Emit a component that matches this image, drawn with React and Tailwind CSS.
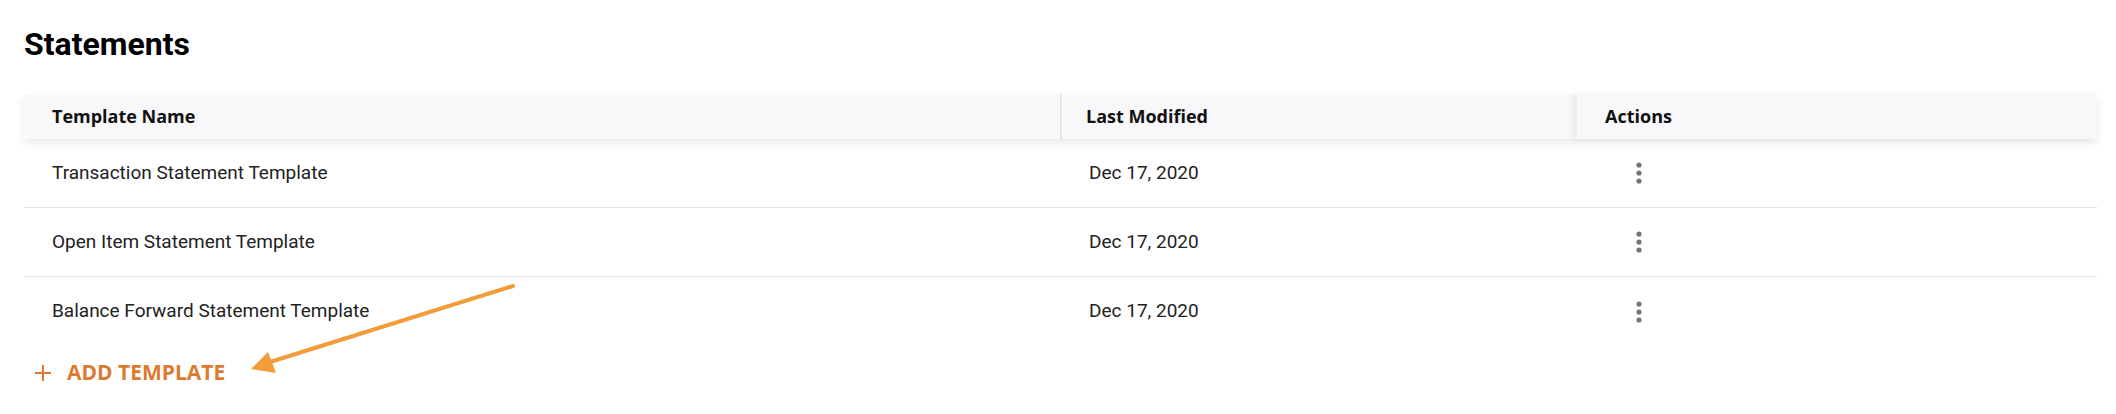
import React from 'react';

const templates = [
  { name: 'Transaction Statement Template', modified: 'Dec 17, 2020' },
  { name: 'Open Item Statement Template', modified: 'Dec 17, 2020' },
  { name: 'Balance Forward Statement Template', modified: 'Dec 17, 2020' },
];

const MoreIcon = () => (
  <svg width="24" height="24" viewBox="0 0 24 24" fill="#767676">
    <circle cx="12" cy="4" r="2.6" />
    <circle cx="12" cy="12" r="2.6" />
    <circle cx="12" cy="20" r="2.6" />
  </svg>
);

// Callout arrow pointing at the add button
const CalloutArrow = () => (
  <svg className="absolute left-0 top-0 pointer-events-none" width="2116" height="414">
    <line x1="513" y1="286" x2="270" y2="362" stroke="#f39c3a" strokeWidth="4" strokeLinecap="round" />
    <polygon points="251,369 268,352 276,373" fill="#f39c3a" />
  </svg>
);

const App = () => {
  return (
    <div className="relative w-[2116px] h-[414px] bg-white pl-6 pt-[26px] font-['Roboto',sans-serif] overflow-hidden">
      <h1 className="text-[32px] leading-9 font-bold text-black">Statements</h1>

      <div className="mt-[32px] w-[2073px]">
        {/* Header */}
        <div className="grid grid-cols-[1038px_515px_520px] h-[45px] bg-[#f8f8fa] shadow-[0_4px_8px_rgba(0,0,0,0.09)] relative z-10 font-['Open_Sans',sans-serif] text-[18px] font-bold text-[#111]">
          <div className="flex items-center pl-7 border-r-2 border-[#e6e6ea]">Template Name</div>
          <div className="flex items-center pl-[24px]">Last Modified</div>
          <div className="flex items-center pl-7 shadow-[-5px_0_6px_rgba(0,0,0,0.05)]">Actions</div>
        </div>

        {/* Rows */}
        {templates.map((t, i) => (
          <div
            key={t.name}
            className={`grid grid-cols-[1038px_515px_520px] h-[69px] text-[19px] text-[#222] ${i < templates.length - 1 ? 'border-b border-[#e2e2e2]' : ''}`}
          >
            <div className="flex items-center pl-7">{t.name}</div>
            <div className="flex items-center pl-[27px]">{t.modified}</div>
            <div className="flex items-center pl-[50px]">
              <button className="flex items-center justify-center"><MoreIcon /></button>
            </div>
          </div>
        ))}
      </div>

      <button className="mt-[13px] flex items-center h-7 pl-[11px] text-[#dd7a30] font-['Open_Sans',sans-serif] font-bold text-[21px]">
        <svg width="16" height="16" viewBox="0 0 16 16" className="mr-4">
          <path d="M8 0v16M0 8h16" stroke="#dd7a30" strokeWidth="2" />
        </svg>
        ADD TEMPLATE
      </button>

      <CalloutArrow />
    </div>
  );
};

export default App;
